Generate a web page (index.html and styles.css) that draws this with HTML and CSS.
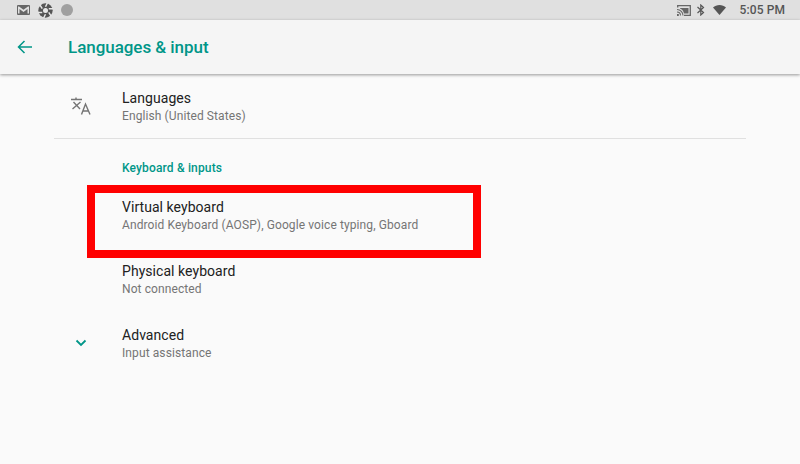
FILE: index.html
```html
<!DOCTYPE html>
<html lang="en">
<head>
  <meta charset="UTF-8" />
  <title>Languages &amp; input</title>
  <link rel="stylesheet" href="styles.css">
</head>
<body>
  <div class="status-bar">
    <div class="status-left">
      <svg class="ic" width="13" height="10" viewBox="0 0 13 10"><rect width="13" height="10" rx="1" fill="#666"/><path fill="#e0e0e0" d="M2 1.500 6.500 4.800 11 1.500h1v7h-1.500V4L6.500 7 2.500 4v4.500H1v-7z"/></svg>
      <svg class="ic ic-shutter" width="15" height="15" viewBox="0 0 24 24"><circle cx="12" cy="12" r="11.500" fill="#555"/><g stroke="#e8e8e8" stroke-width="2.400"><path d="M12 6 15 0M17.200 9 24 9M17.200 15 21 21M12 18 9 24M6.800 15 0 15M6.800 9 3 3"/></g><circle cx="12" cy="12" r="4" fill="#e8e8e8"/></svg>
      <span class="dot"></span>
    </div>
    <div class="status-right">
      <svg class="ic" width="14" height="11" viewBox="0 0 14 11"><path fill="none" stroke="#666" stroke-width="1.300" d="M.7 2.500V.7h12.600v9.600H7"/><path fill="none" stroke="#666" stroke-width="1.100" d="M0 4.500c3.500 0 6 2.800 6 6M0 7c2 0 3.500 1.600 3.500 3.500"/><path fill="#666" d="M0 9h1.800v2H0zM3 3h8.500v5.500H7C6.500 6 5 4 3 3.500z"/></svg>
      <svg class="ic ic-bt" width="8" height="12" viewBox="0 0 8 12"><path fill="none" stroke="#555" stroke-width="1.200" d="M.5 3 6.500 8.500 3.800 11V1l2.700 2.500L.5 9"/></svg>
      <svg class="ic ic-wifi" width="13" height="10" viewBox="0 0 13 10"><path fill="#555" d="M6.500 10 0 2.500C1.700.9 4 0 6.500 0S11.300.9 13 2.500z"/></svg>
      <span class="clock">5:05 PM</span>
    </div>
  </div>

  <header class="toolbar">
    <svg class="back" width="16" height="14" viewBox="0 0 16 14"><path fill="none" stroke="#009688" stroke-width="1.500" d="M15 7H1.500M7.500 1 1.500 7l6 6"/></svg>
    <h1>Languages &amp; input</h1>
  </header>

  <main class="list">
    <div class="row">
      <div class="row-icon">
        <svg width="20" height="18" viewBox="0 0 20 18"><path fill="none" stroke="#757575" stroke-width="1.400" d="M0 2.500h11M5 .5v2M9.500 5 1.500 12M2.500 5 9 12M10.500 17.500 14.500 7l4.500 10.500M12 14h5.500"/></svg>
      </div>
      <div class="row-text">
        <div class="row-title">Languages</div>
        <div class="row-sub">English (United States)</div>
      </div>
    </div>
    <div class="divider"></div>
    <div class="section-title">Keyboard &amp; inputs</div>
    <div class="row">
      <div class="row-icon"></div>
      <div class="row-text">
        <div class="row-title">Virtual keyboard</div>
        <div class="row-sub">Android Keyboard (AOSP), Google voice typing, Gboard</div>
      </div>
      <div class="highlight"></div>
    </div>
    <div class="row">
      <div class="row-icon"></div>
      <div class="row-text">
        <div class="row-title">Physical keyboard</div>
        <div class="row-sub">Not connected</div>
      </div>
    </div>
    <div class="row">
      <div class="row-icon">
        <svg width="12" height="8" viewBox="0 0 12 8"><path fill="none" stroke="#009688" stroke-width="1.800" d="M1.500 1.500 6 6l4.500-4.500"/></svg>
      </div>
      <div class="row-text">
        <div class="row-title">Advanced</div>
        <div class="row-sub">Input assistance</div>
      </div>
    </div>
  </main>
</body>
</html>
```

FILE: styles.css
```css
html, body {
  margin: 0;
  padding: 0;
  height: 100%;
}

body {
  font-family: Roboto, sans-serif;
  background: #fafafa;
  overflow: hidden;
}

.ic {
  display: block;
}

.status-bar {
  height: 20px;
  background: #e0e0e0;
  display: flex;
  justify-content: space-between;
  align-items: center;
  padding: 0 15px 0 17px;
}

.status-left,
.status-right {
  display: flex;
  align-items: center;
}

.ic-shutter {
  margin-left: 8px;
}

.dot {
  width: 12px;
  height: 12px;
  margin-left: 8px;
  border-radius: 50%;
  background: #a0a0a0;
}

.ic-bt {
  margin-left: 6px;
}

.ic-wifi {
  margin-left: 8px;
}

.clock {
  margin-left: 14px;
  font-size: 12px;
  font-weight: 500;
  letter-spacing: 0.1px;
  color: #555;
}

.toolbar {
  height: 54px;
  background: #f5f5f5;
  display: flex;
  align-items: center;
  padding-left: 17px;
  box-shadow: 0 1px 3px rgba(0, 0, 0, 0.4);
}

.back {
  margin-right: 35px;
}

h1 {
  margin: 0;
  font-size: 17px;
  font-weight: 500;
  letter-spacing: -0.05px;
  color: #009688;
}

.list {
  margin: 0 54px;
}

.row {
  height: 64px;
  display: flex;
  align-items: center;
  position: relative;
}

.row-icon {
  width: 68px;
  flex: none;
  display: flex;
  justify-content: center;
  padding-right: 14px;
  box-sizing: border-box;
}

.row-text {
  margin-top: 2px;
}

.row-title {
  font-size: 14px;
  line-height: 18px;
  letter-spacing: 0.05px;
  color: #212121;
}

.row-sub {
  font-size: 12px;
  line-height: 19px;
  letter-spacing: 0.1px;
  color: #757575;
}

.divider {
  height: 1px;
  background: #e0e0e0;
}

.section-title {
  height: 44px;
  line-height: 58px;
  padding-left: 68px;
  font-size: 12px;
  font-weight: 500;
  letter-spacing: 0.15px;
  color: #009688;
}

/* red annotation box drawn over the row */
.highlight {
  position: absolute;
  left: 33px;
  top: 2px;
  width: 394px;
  height: 73px;
  box-sizing: border-box;
  border: 8px solid #f00;
}
```
